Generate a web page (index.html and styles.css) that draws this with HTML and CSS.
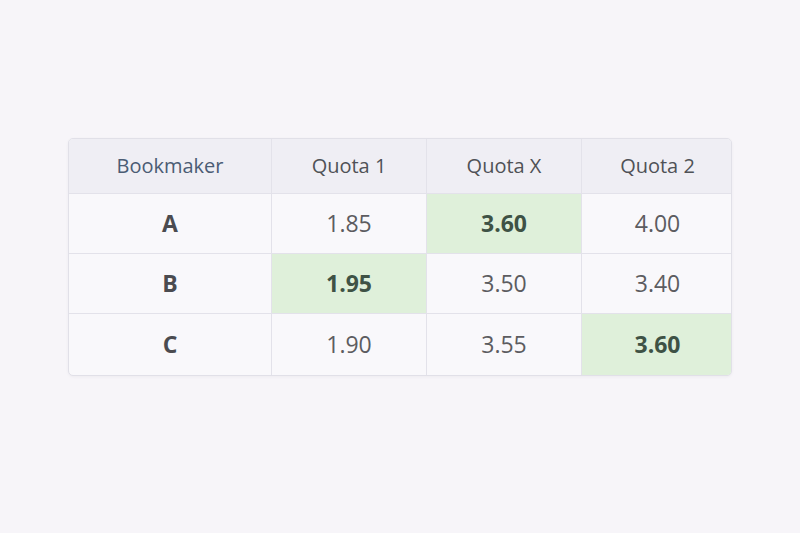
FILE: index.html
```html
<!DOCTYPE html>
<html>
<head>
<meta charset="utf-8">
<link rel="stylesheet" href="styles.css">
</head>
<body>
<div class="page">
  <div class="odds">
    <div class="cell head bm">Bookmaker</div>
    <div class="cell head">Quota 1</div>
    <div class="cell head">Quota X</div>
    <div class="cell head last">Quota 2</div>

    <div class="cell name">A</div>
    <div class="cell">1.85</div>
    <div class="cell best">3.60</div>
    <div class="cell last">4.00</div>

    <div class="cell name">B</div>
    <div class="cell best">1.95</div>
    <div class="cell">3.50</div>
    <div class="cell last">3.40</div>

    <div class="cell name bottom">C</div>
    <div class="cell bottom">1.90</div>
    <div class="cell bottom">3.55</div>
    <div class="cell best bottom last">3.60</div>
  </div>
</div>
</body>
</html>
```

FILE: styles.css
```css
html, body {
  margin: 0;
  padding: 0;
  background: #f7f5f9;
  font-family: "Open Sans", "Noto Sans", sans-serif;
}
.page {
  width: 800px;
  height: 533px;
  display: flex;
  justify-content: center;
  padding-top: 138px;
  box-sizing: border-box;
}
.odds {
  display: grid;
  grid-template-columns: 203px 155px 155px 151px;
  grid-template-rows: 55px 60px 60px 62px;
  width: 664px;
  height: 238px;
  box-sizing: border-box;
  border: 1px solid #e1e0e8;
  border-radius: 5px;
  overflow: hidden;
  background: #f9f8fb;
  box-shadow: 0 1px 3px rgba(80, 80, 110, 0.06);
}
.cell {
  display: flex;
  align-items: center;
  justify-content: center;
  border-right: 1px solid #e3e2ea;
  border-bottom: 1px solid #e3e2ea;
  font-size: 23px;
  color: #5c5c60;
  padding-bottom: 2px;
}
.cell.last { border-right: none; }
.cell.bottom { border-bottom: none; }
.head {
  background: #efeef4;
  font-size: 20px;
  color: #4f5257;
}
.head.bm { color: #4b5c74; }
.name {
  font-weight: 700;
  color: #4b4b50;
  font-size: 23px;
}
.best {
  background: #dff0da;
  font-weight: 700;
  color: #3e5245;
}
```
